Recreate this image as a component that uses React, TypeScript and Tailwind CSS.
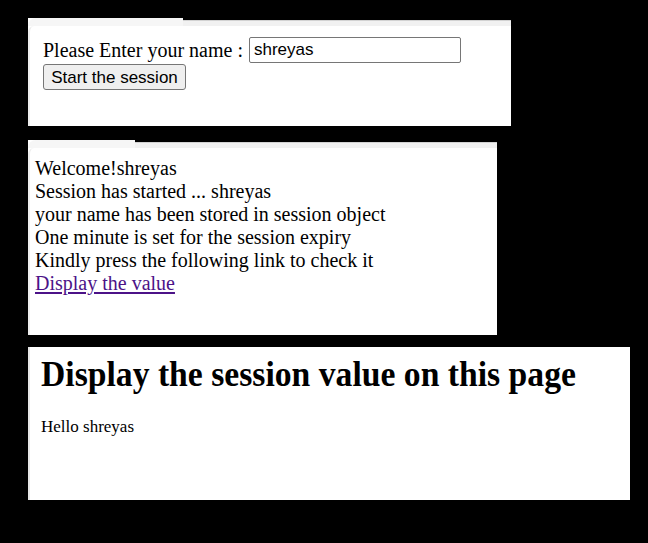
import React from 'react';

function Chrome({ tab }: { tab: string }) {
  return (
    <div className="flex h-[8px] shrink-0">
      <div className={`${tab} h-full bg-[#f6f6f6] rounded-tl-[8px]`} />
      <div className="flex-1 flex flex-col">
        <div className="h-[2px] bg-black" />
        <div className="h-[1px] bg-[#d2d2d2]" />
        <div className="flex-1 bg-[#f1f1f1]" />
      </div>
    </div>
  );
}

export default function App() {
  const serif = { fontFamily: '"Liberation Serif", "Times New Roman", serif' };
  const sans = { fontFamily: '"Liberation Sans", Arial, sans-serif' };
  return (
    <div className="w-[648px] h-[543px] bg-black flex flex-col pl-[28px] pt-[18px] overflow-hidden">
      {/* Page 1: form */}
      <div className="w-[483px] h-[108px] bg-white flex flex-col">
        <Chrome tab="w-[155px]" />
        <div
          className="flex-1 flex flex-col items-start border-l-2 border-[#ededed] rounded-tl-[6px] pl-[13px] pt-[11px] text-black text-[20px]"
          style={serif}
        >
          <div className="flex items-center h-[26px] gap-[6px]">
            <span className="leading-[23px]">Please Enter your name :</span>
            <input
              readOnly
              value="shreyas"
              className="w-[212px] h-[26px] border border-[#767676] rounded-[2px] px-[4px] text-[17px] text-black outline-none"
              style={sans}
            />
          </div>
          <button
            className="block mt-[1px] w-[143px] h-[26px] bg-[#efefef] border border-[#767676] rounded-[3px] text-[17px] text-black leading-none"
            style={sans}
          >
            Start the session
          </button>
        </div>
      </div>

      {/* Page 2: session started */}
      <div className="mt-[14px] w-[469px] h-[195px] bg-white flex flex-col">
        <Chrome tab="w-[107px]" />
        <div
          className="flex-1 border-l-2 border-[#ededed] rounded-tl-[6px] pl-[5px] pt-[9px] text-black text-[20px] leading-[23px]"
          style={serif}
        >
          <div>Welcome!shreyas</div>
          <div>Session has started ... shreyas</div>
          <div>your name has been stored in session object</div>
          <div>One minute is set for the session expiry</div>
          <div>Kindly press the following link to check it</div>
          <a href="#" className="text-[#4c1388] underline underline-offset-[2px]">
            Display the value
          </a>
        </div>
      </div>

      {/* Page 3: display value */}
      <div
        className="mt-[12px] w-[602px] h-[153px] bg-white border-l-2 border-[#e6e6e6] pl-[11px] pt-[9px] text-black"
        style={serif}
      >
        <h1 className="text-[36px] font-bold leading-none origin-left scale-x-[0.935] whitespace-nowrap">
          Display the session value on this page
        </h1>
        <p className="mt-[26px] text-[17px] leading-none">Hello shreyas</p>
      </div>
    </div>
  );
}
